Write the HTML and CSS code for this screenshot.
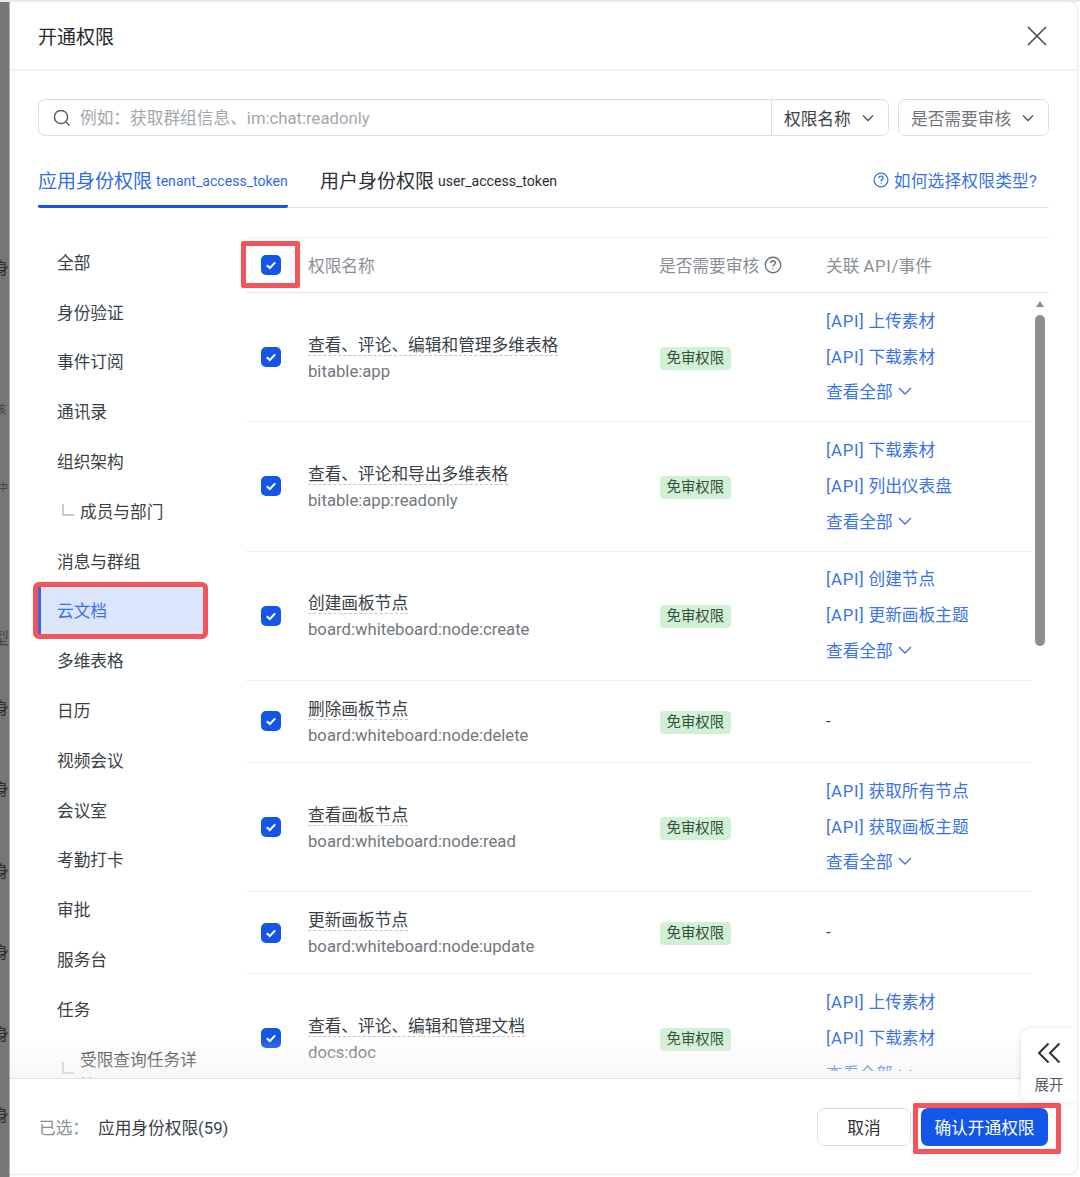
FILE: index.html
```html
<!DOCTYPE html>
<html lang="zh-CN">
<head>
<meta charset="utf-8">
<title>开通权限</title>
<link rel="stylesheet" href="styles.css">
</head>
<body>
<div class="page">
  <div class="backdrop">
    <span class="bd bd-a">身</span>
    <span class="bd bd-b">核</span>
    <span class="bd bd-c">中</span>
    <span class="bd bd-d">型</span>
    <span class="bd bd-e">身</span>
    <span class="bd bd-f">身</span>
    <span class="bd bd-f">身</span>
    <span class="bd bd-f">身</span>
    <span class="bd bd-f">身</span>
    <span class="bd bd-f">身</span>
  </div>
  <div class="modal">
    <header class="modal-head">
      <h1 class="modal-title">开通权限</h1>
      <svg class="close-icon" viewBox="0 0 20 20"><path d="M1 1L19 19M19 1L1 19"/></svg>
    </header>
    <div class="modal-main">
      <div class="search-row">
        <div class="search-box">
          <svg class="search-icon" viewBox="0 0 18 18"><circle cx="8" cy="8" r="6.6"/><path d="M13 13L16.5 16.5"/></svg>
          <span class="search-ph">例如：获取群组信息、im:chat:readonly</span>
        </div>
        <div class="select select-attached">
          <span>权限名称</span>
          <svg class="chev" viewBox="0 0 12 8"><path d="M1 1.5L6 6.5L11 1.5"/></svg>
        </div>
        <div class="select select-free">
          <span>是否需要审核</span>
          <svg class="chev" viewBox="0 0 12 8"><path d="M1 1.5L6 6.5L11 1.5"/></svg>
        </div>
      </div>
      <div class="tabs">
        <div class="tab tab-on"><span class="tab-name">应用身份权限</span> <span class="tab-sub">tenant_access_token</span></div>
        <div class="tab"><span class="tab-name">用户身份权限</span> <span class="tab-sub">user_access_token</span></div>
        <a class="help-link">
          <svg class="q-icon" viewBox="0 0 16 16"><circle cx="8" cy="8" r="6.9"/><path d="M5.9 6.3C5.9 5 6.9 4.2 8 4.2S10.1 5 10.1 6.2C10.1 7.6 8 7.7 8 9.4"/><path class="q-dot" d="M8 11.2V12"/></svg>
          <span class="help-text">如何选择权限类型?</span>
        </a>
      </div>
      <div class="content">
        <nav class="nav">
          <div class="nav-item">全部</div>
          <div class="nav-item">身份验证</div>
          <div class="nav-item">事件订阅</div>
          <div class="nav-item">通讯录</div>
          <div class="nav-item">组织架构</div>
          <div class="nav-item nav-child"><i class="elbow"></i><span>成员与部门</span></div>
          <div class="nav-item">消息与群组</div>
          <div class="nav-item nav-on">云文档</div>
          <div class="nav-item">多维表格</div>
          <div class="nav-item">日历</div>
          <div class="nav-item">视频会议</div>
          <div class="nav-item">会议室</div>
          <div class="nav-item">考勤打卡</div>
          <div class="nav-item">审批</div>
          <div class="nav-item">服务台</div>
          <div class="nav-item">任务</div>
          <div class="nav-item nav-child nav-long"><i class="elbow"></i><span class="nav-wrap">受限查询任务详情</span></div>
        </nav>
        <div class="table">
          <div class="thead">
            <div class="c-check"><span class="annot-wrap"><i class="cb"><svg viewBox="0 0 20 20"><path d="M5.8 10.2L8.8 13L14.2 7.4"/></svg></i><i class="annot annot-check"></i></span></div>
            <div class="c-name">权限名称</div>
            <div class="c-review">是否需要审核 <svg class="q-gray" viewBox="0 0 16 16"><circle cx="8" cy="8" r="6.9"/><path d="M5.9 6.3C5.9 5 6.9 4.2 8 4.2S10.1 5 10.1 6.2C10.1 7.6 8 7.7 8 9.4"/><path d="M8 11.2V12"/></svg></div>
            <div class="c-links"><span>关联 <span class="latin">API</span>/事件</span></div>
          </div>
          <div class="tbody">
            <div class="rows">
              <div class="row row-tall">
                <div class="c-check"><i class="cb"><svg viewBox="0 0 20 20"><path d="M5.8 10.2L8.8 13L14.2 7.4"/></svg></i></div>
                <div class="c-name"><div class="perm"><span>查看、评论、编辑和管理多维表格</span></div><div class="code">bitable:app</div></div>
                <div class="c-review"><span class="badge">免审权限</span></div>
                <div class="c-links"><a><span><span class="latin">[API]</span> 上传素材</span></a><a><span><span class="latin">[API]</span> 下载素材</span></a><a>查看全部 <svg class="more" viewBox="0 0 14 8"><path d="M1 1L7 7L13 1"/></svg></a></div>
              </div>
              <div class="row row-tall">
                <div class="c-check"><i class="cb"><svg viewBox="0 0 20 20"><path d="M5.8 10.2L8.8 13L14.2 7.4"/></svg></i></div>
                <div class="c-name"><div class="perm"><span>查看、评论和导出多维表格</span></div><div class="code">bitable:app:readonly</div></div>
                <div class="c-review"><span class="badge">免审权限</span></div>
                <div class="c-links"><a><span><span class="latin">[API]</span> 下载素材</span></a><a><span><span class="latin">[API]</span> 列出仪表盘</span></a><a>查看全部 <svg class="more" viewBox="0 0 14 8"><path d="M1 1L7 7L13 1"/></svg></a></div>
              </div>
              <div class="row row-tall">
                <div class="c-check"><i class="cb"><svg viewBox="0 0 20 20"><path d="M5.8 10.2L8.8 13L14.2 7.4"/></svg></i></div>
                <div class="c-name"><div class="perm"><span>创建画板节点</span></div><div class="code">board:whiteboard:node:create</div></div>
                <div class="c-review"><span class="badge">免审权限</span></div>
                <div class="c-links"><a><span><span class="latin">[API]</span> 创建节点</span></a><a><span><span class="latin">[API]</span> 更新画板主题</span></a><a>查看全部 <svg class="more" viewBox="0 0 14 8"><path d="M1 1L7 7L13 1"/></svg></a></div>
              </div>
              <div class="row row-short">
                <div class="c-check"><i class="cb"><svg viewBox="0 0 20 20"><path d="M5.8 10.2L8.8 13L14.2 7.4"/></svg></i></div>
                <div class="c-name"><div class="perm"><span>删除画板节点</span></div><div class="code">board:whiteboard:node:delete</div></div>
                <div class="c-review"><span class="badge">免审权限</span></div>
                <div class="c-links"><span class="dash">-</span></div>
              </div>
              <div class="row row-tall">
                <div class="c-check"><i class="cb"><svg viewBox="0 0 20 20"><path d="M5.8 10.2L8.8 13L14.2 7.4"/></svg></i></div>
                <div class="c-name"><div class="perm"><span>查看画板节点</span></div><div class="code">board:whiteboard:node:read</div></div>
                <div class="c-review"><span class="badge">免审权限</span></div>
                <div class="c-links"><a><span><span class="latin">[API]</span> 获取所有节点</span></a><a><span><span class="latin">[API]</span> 获取画板主题</span></a><a>查看全部 <svg class="more" viewBox="0 0 14 8"><path d="M1 1L7 7L13 1"/></svg></a></div>
              </div>
              <div class="row row-short">
                <div class="c-check"><i class="cb"><svg viewBox="0 0 20 20"><path d="M5.8 10.2L8.8 13L14.2 7.4"/></svg></i></div>
                <div class="c-name"><div class="perm"><span>更新画板节点</span></div><div class="code">board:whiteboard:node:update</div></div>
                <div class="c-review"><span class="badge">免审权限</span></div>
                <div class="c-links"><span class="dash">-</span></div>
              </div>
              <div class="row row-tall">
                <div class="c-check"><i class="cb"><svg viewBox="0 0 20 20"><path d="M5.8 10.2L8.8 13L14.2 7.4"/></svg></i></div>
                <div class="c-name"><div class="perm"><span>查看、评论、编辑和管理文档</span></div><div class="code">docs:doc</div></div>
                <div class="c-review"><span class="badge">免审权限</span></div>
                <div class="c-links"><a><span><span class="latin">[API]</span> 上传素材</span></a><a><span><span class="latin">[API]</span> 下载素材</span></a><a>查看全部 <svg class="more" viewBox="0 0 14 8"><path d="M1 1L7 7L13 1"/></svg></a></div>
              </div>
            </div>
            <div class="scrollbar">
              <i class="sb-arrow"></i>
              <i class="sb-thumb"></i>
            </div>
          </div>
        </div>
        <div class="fade"></div>
      </div>
    </div>
    <footer class="modal-foot">
      <div class="picked"><span class="picked-label">已选：</span><span class="picked-val">应用身份权限(59)</span></div>
      <div class="foot-btns">
        <button class="btn btn-cancel">取消</button>
        <span class="annot-wrap">
          <button class="btn btn-ok">确认开通权限</button>
          <i class="annot annot-ok"></i>
        </span>
      </div>
    </footer>
    <div class="expand">
      <svg class="expand-icon" viewBox="0 0 24 22"><path d="M11.5 1.5L2 11L11.5 20.5M22.5 1.5L13 11L22.5 20.5"/></svg>
      <span>展开</span>
    </div>
  </div>
</div>
</body>
</html>
```
FILE: styles.css
```css
* { box-sizing: border-box; }
html, body { margin: 0; height: 100%; background: #fff; }
body {
  font-family: Roboto, "Noto Sans CJK SC", sans-serif;
  font-size: 16.7px;
  color: #3a3f47;
  overflow: hidden;
}
i { display: block; font-style: normal; }
a { color: inherit; text-decoration: none; }
.latin { letter-spacing: .7px; }

.page { display: flex; width: 1080px; height: 1177px; overflow: hidden; border-top: 2px solid #e8e8e8; }

/* dimmed page behind the dialog */
.backdrop {
  width: 10px;
  flex: none;
  background: #767676;
  display: flex;
  flex-direction: column;
  overflow: hidden;
  color: #2c2c2c;
  border-right: 1px solid #a8a8a8;
}
.bd { display: block; height: 24px; line-height: 24px; margin-left: -7px; white-space: nowrap; font-size: 16px; flex: none; }
.bd-a { margin-top: 255px; }
.bd-b { margin-top: 117px; font-size: 12px; color: #3d4a3d; margin-left: -6px; }
.bd-c { margin-top: 54px; font-size: 10px; color: #2f4a32; margin-left: -2px; }
.bd-d { margin-top: 127px; color: #43474e; }
.bd-e { margin-top: 46px; }
.bd-f { margin-top: 57.4px; }

/* dialog */
.modal {
  position: relative;
  flex: 1;
  margin: 0 3px 3px 0;
  background: #fff;
  border-radius: 0 8px 8px 0;
  box-shadow: 0 0 2px #b5b5b5;
  display: flex;
  flex-direction: column;
  overflow: hidden;
}
.modal-head {
  flex: none;
  height: 69px;
  border-bottom: 2px solid #f0f0f0;
  display: flex;
  align-items: center;
  justify-content: space-between;
  padding: 0 30px 0 28px;
}
.modal-title { margin: 0; font-size: 19px; font-weight: 400; color: #24272c; }
.close-icon { width: 20px; height: 20px; fill: none; stroke: #4a4a4a; stroke-width: 1.6; }

.modal-main { flex: 1; min-height: 0; display: flex; flex-direction: column; padding-top: 28px; }

.search-row { flex: none; display: flex; height: 37px; margin: 0 28px; }
.search-box {
  flex: 1;
  display: flex;
  align-items: center;
  gap: 9px;
  padding-left: 14px;
  border: 1px solid #dcdee1;
  border-right: 0;
  border-radius: 7px 0 0 7px;
  color: #a3a7ad;
}
.search-ph { margin-bottom: 1px; }
.search-icon { width: 18px; height: 18px; fill: none; stroke: #5c6066; stroke-width: 1.5; }
.select {
  flex: none;
  display: flex;
  align-items: center;
  justify-content: space-between;
  height: 37px;
  padding: 0 14px 0 12px;
  border: 1px solid #dcdee1;
}
.select-attached { width: 118px; border-radius: 0 7px 7px 0; color: #3a3f47; }
.select-free { width: 151px; margin-left: 9px; border-radius: 7px; color: #70757c; }
.chev { width: 12px; height: 8px; fill: none; stroke: #55595f; stroke-width: 1.5; }

.tabs {
  flex: none;
  display: flex;
  align-items: center;
  height: 72px;
  margin: 0 28px;
  border-bottom: 1px solid #e4e5e7;
  gap: 32px;
  padding-top: 17px;
}
.tab { height: 54px; display: flex; align-items: center; gap: 4px; border-bottom: 3px solid transparent; white-space: nowrap; position: relative; top: 1px; color: #2d3036; }
.tab-on { color: #2f6de8; border-bottom-color: #1456e8; border-radius: 2px; }
.tab-name { font-size: 19px; }
.tab-sub { font-size: 14.1px; margin-top: 3px; }
.help-link { margin-left: auto; margin-right: 12px; display: flex; align-items: center; gap: 5px; color: #3a73e6; }
.help-text { letter-spacing: .2px; }
.q-icon { width: 16px; height: 16px; fill: none; stroke: #3a73e6; stroke-width: 1.3; }

.content { position: relative; flex: 1; min-height: 0; display: flex; margin-top: 29px; overflow: hidden; }

.nav { flex: none; width: 167px; margin-left: 27px; }
.nav-item {
  height: 49.8px;
  display: flex;
  align-items: center;
  padding-left: 20px;
  color: #3a3f47;
}
.nav-on {
  color: #3a73e6;
  background: #dbe5fb;
  border-left: 4px solid #3a66e8;
  padding-left: 16px;
  outline: 5px solid #f2555a;
  outline-offset: -1px;
  border-radius: 2px;
}
.nav-child { padding-left: 25px; }
.elbow { flex: none; width: 12px; height: 12px; border-left: 2px solid #c8cacd; border-bottom: 2px solid #c8cacd; margin-right: 6px; margin-top: -2px; }
.nav-long .elbow { margin-top: 18px; }
.nav-wrap { width: 118px; line-height: 26px; position: relative; top: 15px; }

.table { flex: none; width: 803px; margin-left: 42px; margin-right: 28px; display: flex; flex-direction: column; min-height: 0; }
.thead {
  flex: none;
  height: 56px;
  display: flex;
  align-items: center;
  border-top: 1px solid #eeeff0;
  border-bottom: 1px solid #e4e5e7;
  color: #8a8f96;
}
.c-check { flex: none; width: 62px; display: flex; justify-content: flex-start; padding-left: 15px; }
.c-name { flex: none; width: 351px; }
.row .c-name { padding-top: 1.5px; }
.c-review { flex: none; width: 167px; display: flex; align-items: center; gap: 5px; }
.c-links { flex: 1; min-width: 0; display: flex; flex-direction: column; }
.q-gray { width: 18px; height: 18px; fill: none; stroke: #6b6f75; stroke-width: 1.2; }

.cb { width: 20px; height: 20px; border-radius: 5px; background: #1456e8; }
.cb svg { display: block; width: 20px; height: 20px; fill: none; stroke: #fff; stroke-width: 2; }

.annot-wrap { position: relative; display: block; }
.annot { position: absolute; border: 5px solid #f2555a; border-radius: 2px; }
.annot-check { left: -20px; top: -14px; width: 59px; height: 47px; }
.annot-ok { left: -8px; top: -5px; right: -13px; bottom: -8px; }

.tbody { flex: 1; min-height: 0; display: flex; margin-bottom: 7px; overflow: hidden; }
.rows { flex: none; width: 786px; }
.row { display: flex; align-items: center; border-bottom: 1px solid #eeeff0; }
.row-tall { height: 129.3px; }
.row-short { height: 82px; }
.row-tall .c-links { padding-bottom: 3px; }

.perm { line-height: 27px; color: #3a3f47; }
.perm span { border-bottom: 1px dashed #c4c6c9; }
.code { line-height: 25px; color: #72777e; }
.badge {
  display: inline-block;
  height: 23px;
  line-height: 23px;
  margin-top: 2px;
  padding: 0 6.5px;
  font-size: 14.4px;
  border-radius: 4px;
  background: #d2f0d6;
  color: #33513a;
}
.row .c-review { padding-left: 1px; }
.c-links a { display: flex; align-items: center; gap: 5px; height: 35.8px; color: #3a73e6; }
.dash { color: #3a3f47; }
.more { width: 14px; height: 8px; fill: none; stroke: #3a73e6; stroke-width: 1.4; }

.scrollbar { flex: 1; display: flex; flex-direction: column; align-items: center; padding-right: 1px; padding-top: 8px; }
.sb-arrow { width: 0; height: 0; border-left: 4.5px solid transparent; border-right: 4.5px solid transparent; border-bottom: 6px solid #8e8e8e; }
.sb-thumb { width: 10px; height: 331px; margin-top: 8px; border-radius: 5px; background: #8e8e8e; }

.fade {
  position: absolute;
  left: 0;
  right: 0;
  bottom: 0;
  height: 40px;
  background: linear-gradient(rgba(240,240,240,0), rgba(240,240,240,.55));
  pointer-events: none;
}

.modal-foot {
  flex: none;
  height: 96px;
  border-top: 1px solid #dfe0e2;
  display: flex;
  align-items: center;
  justify-content: space-between;
  padding: 0 29px 0 29px;
}
.picked { display: flex; }
.picked-label { width: 59px; color: #8a8f96; }
.picked-val { color: #3a3f47; }
.foot-btns { display: flex; align-items: center; gap: 10px; }
.btn { display: block; height: 38px; border-radius: 7px; font: inherit; padding: 0; }
.btn-cancel { width: 94px; background: #fff; border: 1px solid #dcdee1; color: #2d3036; }
.btn-ok { width: 127px; background: #1456e8; border: 0; color: #fff; }

.expand {
  position: absolute;
  right: 0;
  top: 1026px;
  width: 56px;
  height: 74px;
  background: #fff;
  border-radius: 10px 0 0 10px;
  box-shadow: -1px 0 5px rgba(0,0,0,.1);
  display: flex;
  flex-direction: column;
  align-items: center;
  font-size: 14.4px;
  color: #55595f;
}
.expand-icon { width: 24px; height: 22px; margin-top: 14px; margin-bottom: 9px; fill: none; stroke: #2f3237; stroke-width: 2; }
```
